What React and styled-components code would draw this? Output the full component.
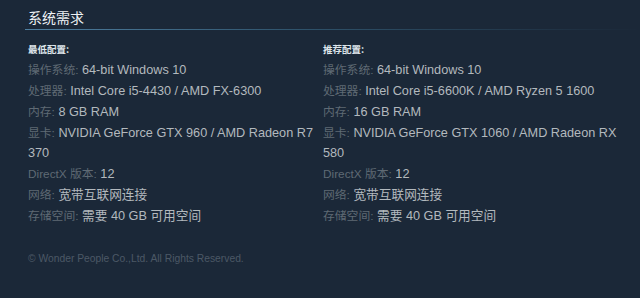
import React from "react";
import styled, { createGlobalStyle } from "styled-components";

const Global = createGlobalStyle`
  html, body { margin: 0; padding: 0; background: #1b2838; }
  body { width: 640px; height: 298px; overflow: hidden; }
`;

const Page = styled.div`
  width: 640px;
  height: 298px;
  box-sizing: border-box;
  background: #1b2838;
  padding: 7px 0 0 25px;
  font-family: "Liberation Sans", Arial, "Noto Sans CJK SC", sans-serif;
`;

const Title = styled.h2`
  margin: 0;
  padding: 0 0 3px 3px;
  font-family: "Noto Sans CJK SC", sans-serif;
  font-size: 14px;
  line-height: 20px;
  font-weight: 400;
  color: #eef2f5;
  background: linear-gradient(to right, #4f7fa0 0%, rgba(59, 110, 140, 0.6) 45%, rgba(59, 110, 140, 0) 100%) left bottom / 100% 1px no-repeat;
`;

const Columns = styled.div`
  display: grid;
  grid-template-columns: 290px 300px;
  column-gap: 5px;
  padding-left: 3px;
  margin-top: 12px;
`;

const Column = styled.div`
  display: flex;
  flex-direction: column;
`;

const Heading = styled.div`
  font-family: "Noto Sans CJK SC", sans-serif;
  font-size: 9.5px;
  line-height: 14px;
  font-weight: 700;
  color: #dfe6ec;
  margin-bottom: 4px;
`;

const List = styled.ul`
  list-style: none;
  margin: 0;
  padding: 0;
`;

const Item = styled.li`
  font-size: 12.7px;
  line-height: 20.85px;
  color: #b3b9be;
`;

const Label = styled.span`
  font-size: 11.8px;
  color: #5f6a74;
`;

const Value = styled.span``;

const Footer = styled.div`
  margin-top: 25px;
  padding-left: 3px;
  font-family: "Liberation Sans", Arial, sans-serif;
  font-size: 10.3px;
  line-height: 14px;
  color: #4c5866;
`;

const min = [
  ["操作系统:", "64-bit Windows 10"],
  ["处理器:", "Intel Core i5-4430 / AMD FX-6300"],
  ["内存:", "8 GB RAM"],
  ["显卡:", "NVIDIA GeForce GTX 960 / AMD Radeon R7 370"],
  ["DirectX 版本:", "12"],
  ["网络:", "宽带互联网连接"],
  ["存储空间:", "需要 40 GB 可用空间"],
];

const rec = [
  ["操作系统:", "64-bit Windows 10"],
  ["处理器:", "Intel Core i5-6600K / AMD Ryzen 5 1600"],
  ["内存:", "16 GB RAM"],
  ["显卡:", "NVIDIA GeForce GTX 1060 / AMD Radeon RX 580"],
  ["DirectX 版本:", "12"],
  ["网络:", "宽带互联网连接"],
  ["存储空间:", "需要 40 GB 可用空间"],
];

const Req = ({ heading, rows }) => (
  <Column>
    <Heading>{heading}</Heading>
    <List>
      {rows.map(([l, v]) => (
        <Item key={l}>
          <Label>{l}</Label> <Value>{v}</Value>
        </Item>
      ))}
    </List>
  </Column>
);

export default function App() {
  return (
    <>
      <Global />
      <Page>
        <Title>系统需求</Title>
        <Columns>
          <Req heading="最低配置:" rows={min} />
          <Req heading="推荐配置:" rows={rec} />
        </Columns>
        <Footer>© Wonder People Co.,Ltd. All Rights Reserved.</Footer>
      </Page>
    </>
  );
}
